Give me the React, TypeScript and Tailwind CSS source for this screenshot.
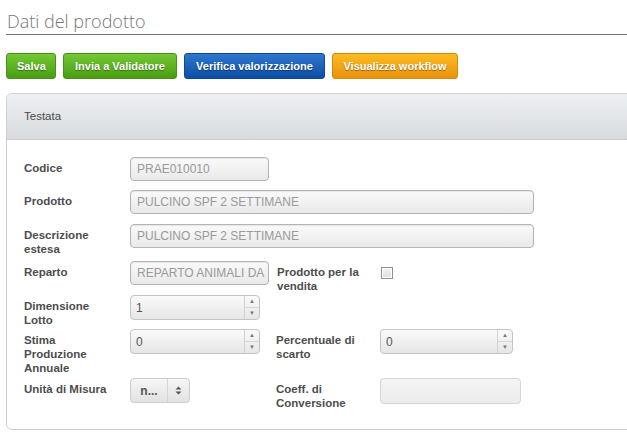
export default function App() {
  const field =
    "h-[24px] rounded-[4px] border border-[#b4b4b4] bg-gradient-to-b from-[#fafafa] to-[#e9e9e9] shadow-[inset_0_1px_1px_rgba(0,0,0,0.08)] px-[6px] flex items-center text-[12px] text-[#9a9a9a]";
  const label = "w-[106px] pt-[4px] text-[11.5px] leading-[14px] font-bold text-[#4d4d4d]";
  const labelR = "w-[104px] pt-[4px] text-[11.5px] leading-[14px] font-bold text-[#4d4d4d]";
  const btn = "h-[26px] px-[10px] rounded-[3px] border text-white text-[11px] font-bold [text-shadow:0_1px_1px_rgba(0,0,0,0.4)]";

  const Spinner = ({ value, width }: { value: string; width: string }) => (
    <div className={`${width} h-[25px] flex rounded-[4px] border border-[#c4c4c4] bg-gradient-to-b from-[#fafafa] to-[#e6e6e6]`}>
      <div className="flex-1 flex items-center px-[5px] text-[12px] text-[#555]">{value}</div>
      <div className="w-[15px] flex flex-col border-l border-[#d0d0d0]">
        <div className="flex-1 flex items-center justify-center text-[6px] text-[#777] border-b border-[#d6d6d6]">▲</div>
        <div className="flex-1 flex items-center justify-center text-[6px] text-[#777]">▼</div>
      </div>
    </div>
  );

  return (
    <div className="w-[627px] h-[435px] overflow-hidden bg-white font-['Liberation_Sans',Arial,sans-serif]">
      <div className="pl-[6px] pt-[9px]">
        <h1 className="font-['Open_Sans',sans-serif] font-light text-[18px] leading-[24px] text-[#777] pl-[1px]">Dati del prodotto</h1>
        <div className="mt-[1px] h-[1px] bg-[#707070]" />

        <div className="mt-[18px] flex gap-[7px]">
          <button className={`${btn} w-[50px] border-[#4b8f17] bg-gradient-to-b from-[#72c933] to-[#4a9d10]`}>Salva</button>
          <button className={`${btn} w-[114px] border-[#4b8f17] bg-gradient-to-b from-[#72c933] to-[#4a9d10]`}>Invia a Validatore</button>
          <button className={`${btn} w-[141px] border-[#0d4a96] bg-gradient-to-b from-[#2f77cf] to-[#0b4da3]`}>Verifica valorizzazione</button>
          <button className={`${btn} w-[126px] border-[#d08b0a] bg-gradient-to-b from-[#fdbb22] to-[#e9920b]`}>Visualizza workflow</button>
        </div>

        <div className="mt-[14px] w-[680px] h-[337px] rounded-[6px] border border-[#cfcfcf]">
          <div className="h-[46px] rounded-t-[6px] border-b border-[#c9cbce] bg-gradient-to-b from-[#eef0f2] to-[#d8dbde] flex items-center pl-[17px] text-[11.5px] text-[#4a4a4a]">
            Testata
          </div>

          <div className="pl-[17px] pt-[17px]">
            <div className="flex h-[33px]">
              <div className={label}>Codice</div>
              <div className={`${field} w-[139px]`}>PRAE010010</div>
            </div>
            <div className="flex h-[34px]">
              <div className={label}>Prodotto</div>
              <div className={`${field} w-[404px]`}>PULCINO SPF 2 SETTIMANE</div>
            </div>
            <div className="flex h-[37px]">
              <div className={label}>Descrizione<br />estesa</div>
              <div className={`${field} w-[404px]`}>PULCINO SPF 2 SETTIMANE</div>
            </div>
            <div className="flex h-[34px]">
              <div className={label}>Reparto</div>
              <div className={`${field} w-[139px] overflow-hidden whitespace-nowrap`}>REPARTO ANIMALI DA</div>
              <div className="w-[8px]" />
              <div className={labelR}>Prodotto per la<br />vendita</div>
              <div className="pt-[6px]">
                <div className="w-[12px] h-[12px] border border-[#8f8f8f] bg-gradient-to-b from-[#f4f4f4] to-[#dcdcdc] shadow-[inset_0_0_0_1px_#fff]" />
              </div>
            </div>
            <div className="flex h-[34px]">
              <div className={label}>Dimensione<br />Lotto</div>
              <Spinner value="1" width="w-[130px]" />
            </div>
            <div className="flex h-[49px]">
              <div className={label}>Stima<br />Produzione<br />Annuale</div>
              <Spinner value="0" width="w-[130px]" />
              <div className="w-[16px]" />
              <div className={labelR}>Percentuale di<br />scarto</div>
              <Spinner value="0" width="w-[133px]" />
            </div>
            <div className="flex">
              <div className={label}>Unità di Misura</div>
              <div className="w-[60px] h-[25px] flex rounded-[4px] border border-[#cdcdcd] bg-gradient-to-b from-[#f6f6f6] to-[#e2e2e2]">
                <div className="w-[37px] flex items-center justify-center text-[12px] font-bold text-[#555] border-r border-[#d4d4d4]">n...</div>
                <div className="flex-1 flex items-center justify-center">
                  <svg width="7" height="9" viewBox="0 0 7 9">
                    <path d="M3.5 0.5 L6.5 3.5 H0.5 Z M3.5 8.5 L6.5 5.5 H0.5 Z" fill="#555" />
                  </svg>
                </div>
              </div>
              <div className="w-[86px]" />
              <div className={labelR}>Coeff. di<br />Conversione</div>
              <div className="w-[141px] h-[26px] rounded-[4px] border border-[#d6d6d6] bg-gradient-to-b from-[#f4f4f4] to-[#ececec]" />
            </div>
          </div>
        </div>
      </div>
    </div>
  );
}
